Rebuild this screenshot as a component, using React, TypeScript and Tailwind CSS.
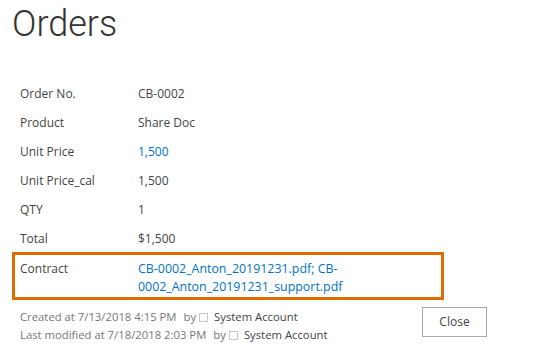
const rows = [
  { label: 'Order No.', value: 'CB-0002' },
  { label: 'Product', value: 'Share Doc' },
  { label: 'Unit Price', value: '1,500', link: true },
  { label: 'Unit Price_cal', value: '1,500' },
  { label: 'QTY', value: '1' },
  { label: 'Total', value: '$1,500' },
]

function Author() {
  return (
    <>
      <span className="ml-[7px]">by</span>
      <span className="inline-block w-[9px] h-[9px] border border-[#c8c8c8] ml-[3px] mr-[6px] align-[-1px]" />
      <span className="text-[#444]">System Account</span>
    </>
  )
}

export default function App() {
  return (
    <div className="w-[548px] h-[351px] bg-white text-[12px] text-[#444] font-['Open_Sans',sans-serif] overflow-hidden">
      <h1 className="pl-[12px] pt-[3px] text-[36px] leading-[42px] font-light text-[#333] font-['Roboto',sans-serif]">
        Orders
      </h1>

      <div className="mt-[34px] ml-[12px] w-[432px]">
        {rows.map((r) => (
          <div key={r.label} className="flex h-[29px] items-center pl-[8px]">
            <div className="w-[118px]">{r.label}</div>
            <div className={r.link ? 'text-[#0072c6]' : ''}>{r.value}</div>
          </div>
        ))}

        <div className="flex border-[3px] border-[#e06c00] pl-[5px] pt-[5px] pb-[1px] leading-[18px] -mt-px">
          <div className="w-[118px] shrink-0">Contract</div>
          <div className="w-[222px] text-[12.4px] text-[#0072c6]">
            <a>CB-0002_Anton_20191231.pdf</a>; <a>CB-0002_Anton_20191231_support.pdf</a>
          </div>
        </div>
      </div>

      <div className="ml-[12px] w-[475px] flex items-start mt-[8px] pl-[8px]">
        <div className="text-[#777] text-[11.3px] leading-[18px]">
          <div>
            Created at 7/13/2018 4:15 PM
            <Author />
          </div>
          <div>
            Last modified at 7/18/2018 2:03 PM
            <Author />
          </div>
        </div>
        <button className="ml-auto -mt-px w-[65px] h-[30px] border border-[#ababab] bg-white text-[#444] text-[12px]">
          Close
        </button>
      </div>
    </div>
  )
}
